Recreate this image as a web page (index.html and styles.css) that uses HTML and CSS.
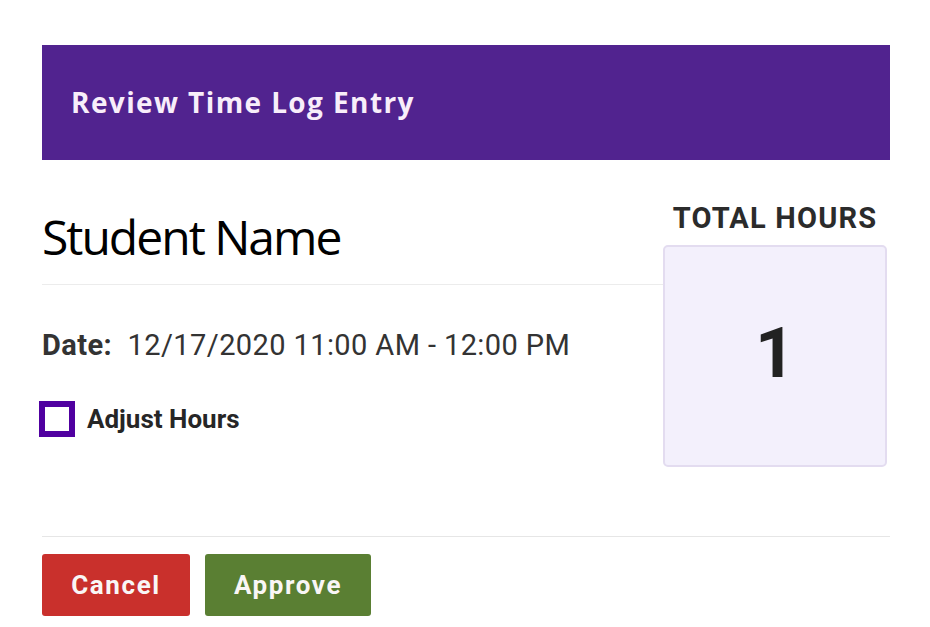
FILE: index.html
```html
<!DOCTYPE html>
<html lang="en">
<head>
    <meta charset="UTF-8">
    <meta name="viewport" content="width=device-width, initial-scale=1.0">
    <title>Review Time Log Entry</title>
    <link rel="stylesheet" href="styles.css">
</head>
<body>
    <div class="modal">
        <header class="modal-header">
            <h2>Review Time Log Entry</h2>
        </header>

        <div class="modal-body">
            <div class="details">
                <h1 class="student">Student Name</h1>
                <p class="date"><strong>Date:</strong> 12/17/2020 11:00 AM - 12:00 PM</p>
                <label class="adjust">
                    <span class="check"></span>
                    Adjust Hours
                </label>
            </div>

            <div class="total">
                <h3>TOTAL HOURS</h3>
                <div class="total-box">1</div>
            </div>
        </div>

        <!-- Actions -->
        <div class="modal-footer">
            <button class="btn cancel">Cancel</button>
            <button class="btn approve">Approve</button>
        </div>
    </div>
</body>
</html>
```

FILE: styles.css
```css
body {
    font-family: Roboto, Arial, sans-serif;
    background-color: #ffffff;
    margin: 0;
    padding: 0;
}

.modal {
    width: 848px;
    margin: 45px 0 0 42px;
}

.modal-header {
    background-color: #51238f;
    color: #f8eefa;
    height: 115px;
    display: flex;
    align-items: center;
    padding-left: 29px;
}

.modal-header h2 {
    margin: 0;
    font-family: "Open Sans", sans-serif;
    font-size: 28px;
    font-weight: 700;
    letter-spacing: 1.4px;
    padding-bottom: 2px;
}

.modal-body {
    display: flex;
    height: 376px;
    border-bottom: 1px solid #e6e6e6;
}

.details {
    flex: 1;
}

.student {
    margin: 0;
    padding: 46px 0 16px;
    font-family: "Open Sans", sans-serif;
    font-weight: 400;
    font-size: 48px;
    line-height: 62px;
    letter-spacing: -2px;
    color: #000;
    border-bottom: 1px solid #ececec;
}

.date {
    margin: 43px 0 0;
    font-size: 29px;
    letter-spacing: 0.4px;
    color: #333;
}

.date strong {
    margin-right: 8px;
}

.adjust {
    display: flex;
    align-items: center;
    gap: 12px;
    margin: 39px 0 0 -3px;
    font-size: 26px;
    font-weight: 700;
    color: #262626;
}

.check {
    width: 24px;
    height: 24px;
    border: 6.5px solid #5000a0;
    background-color: #fff;
}

.total {
    width: 224px;
    margin-right: 3px;
    text-align: center;
}

.total h3 {
    margin: 0;
    padding-top: 40px;
    font-size: 29px;
    font-weight: 700;
    letter-spacing: 1.2px;
    color: #2b2b2b;
    line-height: 36px;
}

.total-box {
    margin-top: 9px;
    height: 222px;
    background-color: #f3f0fc;
    border: 2px solid #e3dcf0;
    border-radius: 5px;
    display: flex;
    align-items: center;
    justify-content: center;
    padding-bottom: 6px;
    box-sizing: border-box;
    font-size: 70px;
    font-weight: 700;
    color: #222;
}

.modal-footer {
    display: flex;
    gap: 15px;
    padding-top: 17px;
}

.btn {
    height: 62px;
    border: none;
    border-radius: 3px;
    color: #f9f6f6;
    font-family: Roboto, Arial, sans-serif;
    font-size: 26px;
    font-weight: 700;
    letter-spacing: 1.6px;
    cursor: pointer;
}

.cancel {
    width: 148px;
    background-color: #c9302c;
}

.approve {
    width: 166px;
    background-color: #5a7f33;
}
```
